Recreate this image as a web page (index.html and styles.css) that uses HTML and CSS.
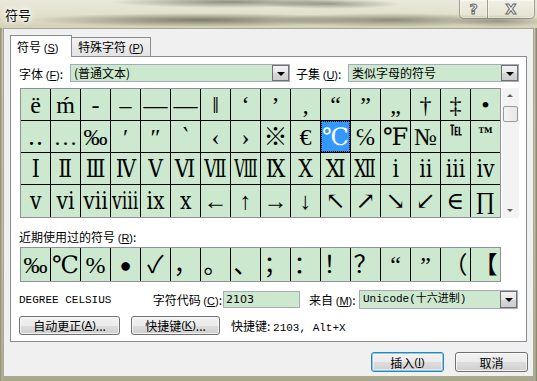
FILE: index.html
```html
<!DOCTYPE html>
<html lang="zh-CN">
<head>
<meta charset="utf-8">
<title>符号</title>
<link rel="stylesheet" href="styles.css">
</head>
<body>
<div class="window">
  <div class="titlebar">
    <span class="title">符号</span>
    <div class="caption">
      <span class="cbtn help">?</span>
      <span class="cbtn close">X</span>
    </div>
  </div>
  <div class="client">
    <div class="tabs">
      <div class="tab active">符号 <span class="acc">(<u>S</u>)</span></div>
      <div class="tab">特殊字符 <span class="acc">(<u>P</u>)</span></div>
    </div>
    <div class="panel">
      <div class="row fontrow">
        <span class="lbl lbl-font">字体 <span class="acc">(<u>F</u>)</span>:</span>
        <div class="select sel-font"><span class="val">(普通文本)</span><span class="drop"></span></div>
        <span class="lbl lbl-sub">子集 <span class="acc">(<u>U</u>)</span>:</span>
        <div class="select sel-sub"><span class="val">类似字母的符号</span><span class="drop"></span></div>
      </div>
      <div class="gridwrap">
        <div class="grid main">
          <span class="c">ë</span><span class="c">ḿ</span><span class="c">‐</span><span class="c">–</span><span class="c">—</span><span class="c">―</span><span class="c">‖</span><span class="c">‘</span><span class="c">’</span><span class="c">‚</span><span class="c">“</span><span class="c">”</span><span class="c">„</span><span class="c">†</span><span class="c">‡</span><span class="c">•</span>
          <span class="c">‥</span><span class="c">…</span><span class="c">‰</span><span class="c">′</span><span class="c">″</span><span class="c">‵</span><span class="c">‹</span><span class="c">›</span><span class="c">※</span><span class="c">€</span><span class="c sel">℃</span><span class="c">℅</span><span class="c">℉</span><span class="c">№</span><span class="c"><b class="tiny">℡</b></span><span class="c"><b class="tm">™</b></span>
          <span class="c"><b class="rn">Ⅰ</b></span><span class="c"><b class="rn">Ⅱ</b></span><span class="c"><b class="rn">Ⅲ</b></span><span class="c"><b class="rn">Ⅳ</b></span><span class="c"><b class="rn">Ⅴ</b></span><span class="c"><b class="rn">Ⅵ</b></span><span class="c"><b class="rn w">Ⅶ</b></span><span class="c"><b class="rn ww">Ⅷ</b></span><span class="c"><b class="rn">Ⅸ</b></span><span class="c"><b class="rn">Ⅹ</b></span><span class="c"><b class="rn">Ⅺ</b></span><span class="c"><b class="rn w">Ⅻ</b></span><span class="c"><b class="rn">ⅰ</b></span><span class="c"><b class="rn">ⅱ</b></span><span class="c"><b class="rn">ⅲ</b></span><span class="c"><b class="rn">ⅳ</b></span>
          <span class="c"><b class="rn">ⅴ</b></span><span class="c"><b class="rn">ⅵ</b></span><span class="c"><b class="rn">ⅶ</b></span><span class="c"><b class="rn w">ⅷ</b></span><span class="c"><b class="rn">ⅸ</b></span><span class="c"><b class="rn">ⅹ</b></span><span class="c">←</span><span class="c">↑</span><span class="c">→</span><span class="c">↓</span><span class="c">↖</span><span class="c">↗</span><span class="c">↘</span><span class="c">↙</span><span class="c">∈</span><span class="c">∏</span>
        </div>
        <div class="vscroll">
          <span class="arrow up"></span>
          <span class="thumb"></span>
          <span class="track"></span>
          <span class="arrow down"></span>
        </div>
      </div>
      <div class="recent-label">近期使用过的符号 <span class="acc">(<u>R</u>)</span>:</div>
      <div class="grid recent">
        <span class="c">‰</span><span class="c">℃</span><span class="c">%</span><span class="c"><b class="dot">●</b></span><span class="c">✓</span><span class="c">，</span><span class="c">。</span><span class="c">、</span><span class="c">；</span><span class="c">：</span><span class="c">！</span><span class="c">？</span><span class="c">“</span><span class="c">”</span><span class="c">（</span><span class="c">【</span>
      </div>
      <div class="row info">
        <span class="charname">DEGREE CELSIUS</span>
        <span class="lbl lbl-code">字符代码 <span class="acc">(<u>C</u>)</span>:</span>
        <div class="input code">2103</div>
        <span class="lbl lbl-from">来自 <span class="acc">(<u>M</u>)</span>:</span>
        <div class="select sel-from"><span class="val mono">Unicode(十六进制)</span><span class="drop"></span></div>
      </div>
      <div class="row btns">
        <span class="btn small b-auto">自动更正 <span class="acc">(<u>A</u>)</span>...</span>
        <span class="btn small b-key">快捷键 <span class="acc">(<u>K</u>)</span>...</span>
        <span class="shortcut">快捷键: <span class="mono">2103, Alt+X</span></span>
      </div>
    </div>
    <div class="footer">
      <span class="btn big default">插入 <span class="acc">(<u>I</u>)</span></span>
      <span class="btn big">取消</span>
    </div>
  </div>
</div>
</body>
</html>
```

FILE: styles.css
```css
* { box-sizing: border-box; }
html, body { margin: 0; padding: 0; }
body {
  width: 537px;
  height: 381px;
  overflow: hidden;
  font-family: "Noto Sans CJK SC", "DejaVu Sans", sans-serif;
  font-size: 12px;
  color: #000;
}
.window {
  width: 537px;
  height: 381px;
  display: flex;
  flex-direction: column;
  background:
    linear-gradient(to right, #8d8a6c 0, #b9b79c 2px, transparent 3px, transparent 534px, #b4b196 535px, #7d7b60 537px),
    linear-gradient(to bottom, #d8d6c0 0, #c9c7ac 60%, #a9a78b 100%);
}
.titlebar {
  height: 28px;
  flex: none;
  display: flex;
  align-items: flex-start;
  background:
    radial-gradient(ellipse 120px 6px at 230px 2px, rgba(70,70,55,0.55), rgba(70,70,55,0) 100%),
    radial-gradient(ellipse 70px 5px at 330px 4px, rgba(70,70,55,0.45), rgba(70,70,55,0) 100%),
    radial-gradient(ellipse 170px 7px at 200px 20px, rgba(60,60,45,0.6), rgba(60,60,45,0) 100%),
    radial-gradient(ellipse 120px 7px at 390px 20px, rgba(60,60,45,0.5), rgba(60,60,45,0) 100%),
    radial-gradient(ellipse 50px 6px at 500px 21px, rgba(60,60,45,0.4), rgba(60,60,45,0) 100%),
    linear-gradient(to bottom, #e9e8da 0, #e3e1cc 50%, #d3d1b6 100%);
}
.title {
  margin: 6px 0 0 5px;
  font-size: 13px;
  line-height: 17px;
  color: #000;
  text-shadow: 0 0 4px #fff, 0 0 6px #fff, 0 0 8px #fff;
}
.caption {
  margin-left: auto;
  margin-right: 2px;
  display: flex;
  height: 19px;
}
.cbtn {
  height: 19px;
  display: flex;
  align-items: center;
  justify-content: center;
  font-family: "DejaVu Sans", sans-serif;
  font-weight: bold;
  color: #f4f4f4;
  -webkit-text-stroke: 1px #6a6a6a;
  border: 1px solid rgba(90,90,80,0.55);
  border-top: none;
  background: linear-gradient(to bottom, rgba(255,255,255,0.35), rgba(255,255,255,0.1));
  box-shadow: inset 0 0 0 1px rgba(255,255,255,0.45);
}
.help { width: 29px; font-size: 14px; border-radius: 0 0 0 5px; }
.close { width: 47px; font-size: 14px; border-left: none; border-radius: 0 0 5px 0; }

.client {
  flex: 1;
  margin: 0 3px 4px 3px;
  background: #f0f0f0;
  border: 1px solid #a9a894;
  display: flex;
  flex-direction: column;
}
.acc { font-family: "Liberation Sans", sans-serif; font-size: 11px; }
.tabs {
  display: flex;
  align-items: flex-end;
  height: 27px;
  padding-left: 6px;
  position: relative;
  z-index: 1;
}
.tab {
  height: 19px;
  padding: 0 7px 0 6px;
  line-height: 18px;
  border: 1px solid #898c95;
  border-bottom: none;
  border-left: none;
  background: linear-gradient(to bottom, #f2f2f2, #e3e3e3);
  font-size: 12px;
}
.tab.active {
  height: 22px;
  width: 62px;
  border-left: 1px solid #898c95;
  background: #fff;
  line-height: 21px;
  padding-left: 6px;
  margin-bottom: -1px;
}
.panel {
  margin: 0 6px 0 6px;
  height: 286px;
  background: #fff;
  border: 1px solid #898c95;
  padding: 7px 0 0 8px;
  display: flex;
  flex-direction: column;
}
.row { display: flex; align-items: center; }
.fontrow { height: 18px; }
.lbl { white-space: nowrap; }
.lbl-font { width: 51px; }
.lbl-sub { width: 52px; margin-left: 6px; }
.select {
  height: 18px;
  display: flex;
  align-items: stretch;
  border: 1px solid #a5acb5;
  background: #cce8cf;
}
.select .val { flex: 1; padding-left: 3px; line-height: 16px; white-space: nowrap; overflow: hidden; }
.select .drop {
  width: 17px;
  border: 1px solid #707070;
  background: linear-gradient(to bottom, #f3f3f3 0, #e6e6e6 50%, #d7d7d7 51%, #cfcfcf 100%);
  position: relative;
}
.select .drop::after {
  content: "";
  position: absolute;
  left: 4px;
  top: 6px;
  border-left: 4px solid transparent;
  border-right: 4px solid transparent;
  border-top: 4px solid #000;
}
.sel-font { width: 220px; }
.sel-sub { width: 171px; }

.gridwrap {
  display: flex;
  margin-top: 6px;
  margin-left: 1px;
  height: 130px;
}
.grid {
  display: grid;
  grid-template-columns: repeat(16, 29px);
  gap: 1px;
  background: #000;
  border: 1px solid #8e9196;
  font-family: "Liberation Serif", "DejaVu Serif", "Noto Sans CJK SC", serif;
}
.grid.main { grid-template-rows: 31px 31px 31px 32px; width: 481px; }
.c {
  background: #cce8cf;
  display: flex;
  align-items: center;
  justify-content: center;
  font-size: 24px;
  line-height: 1;
  overflow: hidden;
  white-space: nowrap;
}
.c b { font-weight: normal; display: inline-block; }
.c .rn { transform: scaleX(0.85); }
.c .rn.w { transform: scaleX(0.72); }
.c .rn.ww { transform: scaleX(0.62); }
.c .tiny { font-size: 14px; font-weight: bold; transform: scaleX(0.85); align-self: flex-start; margin-top: 3px; }
.c .tm { font-size: 15px; font-weight: bold; align-self: flex-start; margin-top: 4px; }
.c .dot { font-size: 20px; }
.c.sel {
  background: #3399ff;
  color: #fff;
  outline: 1px dotted #000;
  outline-offset: -1px;
}
.vscroll {
  width: 17px;
  margin-left: 1px;
  display: flex;
  flex-direction: column;
  background: #f3f3f3;
}
.vscroll .arrow { height: 17px; position: relative; }
.vscroll .arrow::after {
  content: "";
  position: absolute;
  left: 5px;
  border-left: 3px solid transparent;
  border-right: 3px solid transparent;
}
.vscroll .up::after { top: 6px; border-bottom: 3px solid #606060; }
.vscroll .down::after { bottom: 6px; border-top: 3px solid #606060; }
.vscroll .thumb {
  height: 16px;
  margin: 1px 1px 0 1px;
  border: 1px solid #9a9a9a;
  border-radius: 2px;
  background: linear-gradient(to right, #f4f4f4, #e6e6e6);
}
.vscroll .track { flex: 1; }

.recent-label { margin-top: 11px; height: 15px; line-height: 15px; }
.grid.recent {
  margin-top: 3px;
  margin-left: 1px;
  width: 481px;
  grid-template-rows: 33px;
}

.info { margin-top: 9px; height: 17px; }
.charname {
  width: 125px;
  font-family: "Liberation Mono", monospace;
  font-size: 11px;
}
.lbl-code { width: 79px; text-align: right; padding-right: 1px; }
.input {
  width: 77px;
  height: 17px;
  border: 1px solid #a5acb5;
  background: #cce8cf;
  padding-left: 2px;
  line-height: 15px;
  font-family: "DejaVu Sans", sans-serif;
  font-size: 11px;
}
.lbl-from { margin-left: 9px; width: 50px; }
.sel-from { width: 159px; height: 19px; }
.mono { font-family: "Liberation Mono", "Noto Sans CJK SC", monospace; font-size: 11px; }

.btns { margin-top: 8px; height: 18px; }
.btn {
  display: flex;
  align-items: center;
  justify-content: center;
  border: 1px solid #707070;
  border-radius: 3px;
  background: linear-gradient(to bottom, #f2f2f2 0, #ebebeb 50%, #dddddd 51%, #cfcfcf 100%);
  box-shadow: inset 0 0 0 1px rgba(255,255,255,0.7);
  white-space: nowrap;
}
.small { height: 19px; }
.b-auto { width: 101px; }
.b-key { width: 89px; margin-left: 11px; }
.shortcut { margin-left: 11px; }

.footer {
  display: flex;
  justify-content: flex-end;
  margin-top: 10px;
  padding-right: 5px;
}
.big { height: 20px; width: 73px; }
.default {
  border-color: #3c7fb1;
  box-shadow: inset 0 0 0 1px #7ad0ee, inset 0 0 0 2px rgba(255,255,255,0.5);
  margin-right: 11px;
}
```
